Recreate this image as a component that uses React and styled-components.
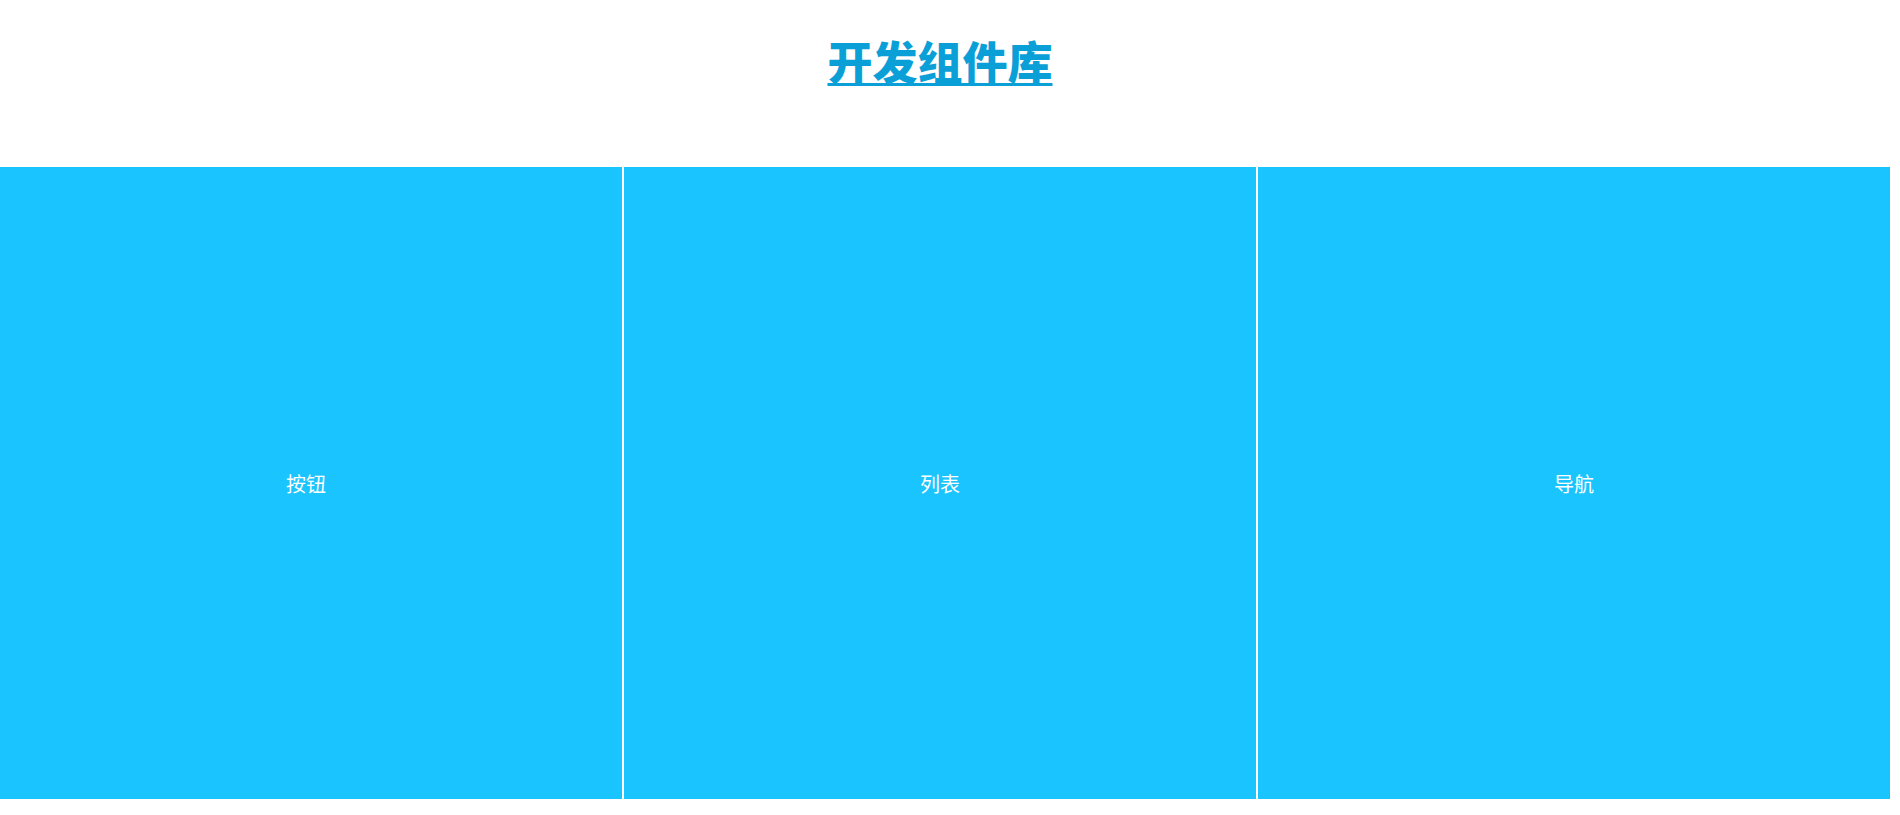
import styled, { createGlobalStyle } from 'styled-components';

const GlobalStyle = createGlobalStyle`
  html, body {
    margin: 0;
    padding: 0;
    background: #fff;
    overflow: hidden;
    font-family: "Noto Sans CJK SC", "Noto Sans", sans-serif;
  }
`;

const items = ['按钮', '列表', '导航'];

export default function App() {
  return (
    <Page>
      <GlobalStyle />
      <Header>
        <Title>开发组件库</Title>
      </Header>
      <Grid>
        {items.map((name) => (
          <Card key={name}>{name}</Card>
        ))}
      </Grid>
    </Page>
  );
}

const Page = styled.div`
  width: 1900px;
  height: 815px;
`;

const Header = styled.header`
  width: 1880px;
  height: 167px;
  display: flex;
  justify-content: center;
  align-items: flex-start;
`;

const Title = styled.h1`
  margin: 31px 0 0;
  font-size: 45px;
  line-height: 60px;
  font-weight: 900;
  color: #0b9fd8;
  text-decoration: underline;
  text-decoration-thickness: 3px;
  text-underline-offset: 3px;
`;

const Grid = styled.main`
  display: flex;
  gap: 2px;
  margin-left: -10px;
`;

const Card = styled.div`
  flex: 0 0 632px;
  height: 632px;
  background: #1ac4ff;
  color: #fff;
  font-size: 20px;
  display: flex;
  align-items: center;
  justify-content: center;
`;
